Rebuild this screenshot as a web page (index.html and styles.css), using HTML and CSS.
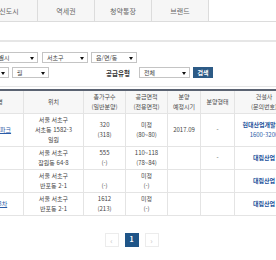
FILE: index.html
```html
<!DOCTYPE html>
<html lang="ko">
<head>
<meta charset="utf-8">
<link rel="stylesheet" href="styles.css">
</head>
<body>
<div class="page">
  <ul class="tabs">
    <li class="tab">재개발</li>
    <li class="tab">신도시</li>
    <li class="tab">역세권</li>
    <li class="tab">청약통장</li>
    <li class="tab">브랜드</li>
  </ul>

  <div class="search">
    <div class="search-row">
      <span class="lead-label">지역</span>
      <div class="sel w-city">서울특별시<i class="arrow"></i></div>
      <div class="sel w-gu gap4">서초구<i class="arrow"></i></div>
      <div class="sel w-dong gap3">읍/면/동<i class="arrow"></i></div>
    </div>
    <div class="search-row">
      <span class="lead-label">분양시기</span>
      <div class="sel w-year">2017<i class="arrow"></i></div>
      <div class="sel w-month gap3">월<i class="arrow"></i></div>
      <span class="type-label">공급유형</span>
      <div class="sel w-type">전체<i class="arrow"></i></div>
      <button class="btn-search">검색</button>
    </div>
  </div>

  <table class="list">
    <colgroup>
      <col class="c-area"><col class="c-name"><col class="c-loc"><col class="c-house">
      <col class="c-size"><col class="c-date"><col class="c-kind"><col class="c-corp"><col class="c-etc">
    </colgroup>
    <thead>
      <tr>
        <th>지역</th><th>단지명</th><th>위치</th><th>총가구수<br>(일반분양)</th>
        <th>공급면적<br>(전용면적)</th><th>분양<br>예정시기</th><th>분양형태</th>
        <th>건설사<br>(문의번호)</th><th>모델하우스</th>
      </tr>
    </thead>
    <tbody>
      <tr>
        <td>서울</td><td><a class="name" href="#">서초아이파크</a></td>
        <td>서울 서초구<br>서초동 1582-3<br>일원</td><td>320<br>(318)</td>
        <td>미정<br>(80~80)</td><td>2017.09</td><td>-</td>
        <td><span class="corp">현대산업개발(주)</span><br><span class="tel">1600-3200</span></td><td></td>
      </tr>
      <tr>
        <td>서울</td><td></td>
        <td>서울 서초구<br>잠원동 64-8</td><td>555<br>(-)</td>
        <td>110~118<br>(78~84)</td><td></td><td>-</td>
        <td><span class="corp">대림산업</span></td><td></td>
      </tr>
      <tr>
        <td>서울</td><td></td>
        <td>서울 서초구<br>반포동 2-1</td><td>&nbsp;<br>(-)</td>
        <td>미정<br>(-)</td><td></td><td></td>
        <td><span class="corp">대림산업</span></td><td></td>
      </tr>
      <tr>
        <td>서울</td><td><a class="name" href="#">신반포3차</a></td>
        <td>서울 서초구<br>반포동 2-1</td><td>1612<br>(213)</td>
        <td>미정<br>(-)</td><td></td><td></td>
        <td><span class="corp">대림산업</span></td><td></td>
      </tr>
    </tbody>
  </table>

  <div class="paging">
    <a class="pg pg-arrow" href="#">&lsaquo;</a>
    <a class="pg pg-on" href="#">1</a>
    <a class="pg pg-arrow" href="#">&rsaquo;</a>
  </div>
</div>
</body>
</html>
```

FILE: styles.css
```css
html, body {
  margin: 0;
  padding: 0;
  overflow: hidden;
  background: #fff;
}
body {
  font-family: "Noto Sans CJK KR", "Noto Sans", sans-serif;
  font-size: 6px;
  color: #444;
}
.page {
  margin-left: -76px;
  width: 415px;
}

/* tabs */
.tabs {
  display: flex;
  list-style: none;
  margin: 0;
  padding: 0;
  height: 21px;
  border-bottom: 1px solid #dcdcdc;
}
.tab {
  width: 56px;
  height: 21px;
  line-height: 22px;
  text-align: center;
  font-size: 7px;
  color: #666;
  background: #f6f6f6;
  border-right: 1px solid #dcdcdc;
}

/* search box */
.search {
  margin-top: 18px;
  border-top: 2px solid #e6e6e6;
  border-bottom: 1px solid #e6e6e6;
  padding: 10px 0 8px 12px;
  display: flex;
  flex-direction: column;
  gap: 4px;
}
.search-row {
  display: flex;
  align-items: center;
  height: 11px;
}
.lead-label {
  width: 41px;
  font-weight: bold;
  color: #444;
}
.sel {
  position: relative;
  box-sizing: border-box;
  height: 11px;
  line-height: 9px;
  border: 1px solid #c4c4c4;
  background: #fff;
  padding-left: 4px;
  color: #444;
  white-space: nowrap;
  overflow: hidden;
}
.arrow {
  position: absolute;
  right: 3px;
  top: 4px;
  width: 0;
  height: 0;
  border-left: 2px solid transparent;
  border-right: 2px solid transparent;
  border-top: 3px solid #111;
}
.w-city { width: 61px; }
.w-gu { width: 46px; }
.w-dong { width: 46px; }
.w-year { width: 32px; }
.w-month { width: 37px; }
.w-type { width: 51px; margin-left: 6px; }
.gap3 { margin-left: 3px; }
.gap4 { margin-left: 4px; }
.type-label {
  margin-left: 57px;
  width: 27px;
  font-size: 6.5px;
  font-weight: bold;
  color: #333;
  white-space: nowrap;
}
.btn-search {
  margin-left: 3px;
  width: 20px;
  height: 11px;
  padding: 0;
  border: 0;
  background: #2d5b86;
  color: #fff;
  font-family: inherit;
  font-size: 6px;
  font-weight: bold;
  line-height: 11px;
}

/* table */
.list {
  margin-top: 2px;
  width: 415px;
  table-layout: fixed;
  border-collapse: collapse;
  border-top: 2px solid #5b6372;
}
.c-area { width: 41px; }
.c-name { width: 58px; }
.c-loc { width: 60px; }
.c-house { width: 42px; }
.c-size { width: 42px; }
.c-date { width: 33px; }
.c-kind { width: 34px; }
.c-corp { width: 59px; }
.c-etc { width: 46px; }
.list th,
.list td {
  padding: 1px 0;
  line-height: 10px;
  text-align: center;
  vertical-align: middle;
  border-bottom: 1px solid #e4e4e4;
  border-left: 1px solid #e4e4e4;
  white-space: nowrap;
  overflow: visible;
}
.list th {
  background: #f7f7f7;
  font-weight: normal;
  color: #4a4a4a;
}
.list td {
  color: #444;
}
.name {
  color: #2a5ca8;
  text-decoration: underline;
}
.corp {
  color: #21509a;
  font-weight: bold;
}
.tel {
  color: #2a5ca8;
}

/* paging */
.paging {
  margin-top: 17px;
  display: flex;
  justify-content: center;
  gap: 6px;
}
.pg {
  box-sizing: border-box;
  width: 14px;
  height: 14px;
  line-height: 13px;
  text-align: center;
  font-size: 7px;
  text-decoration: none;
}
.pg-arrow {
  border: 1px solid #ececec;
  color: #c4c4c4;
  font-size: 8px;
}
.pg-on {
  background: #1f5588;
  color: #fff;
  font-weight: bold;
}
```
